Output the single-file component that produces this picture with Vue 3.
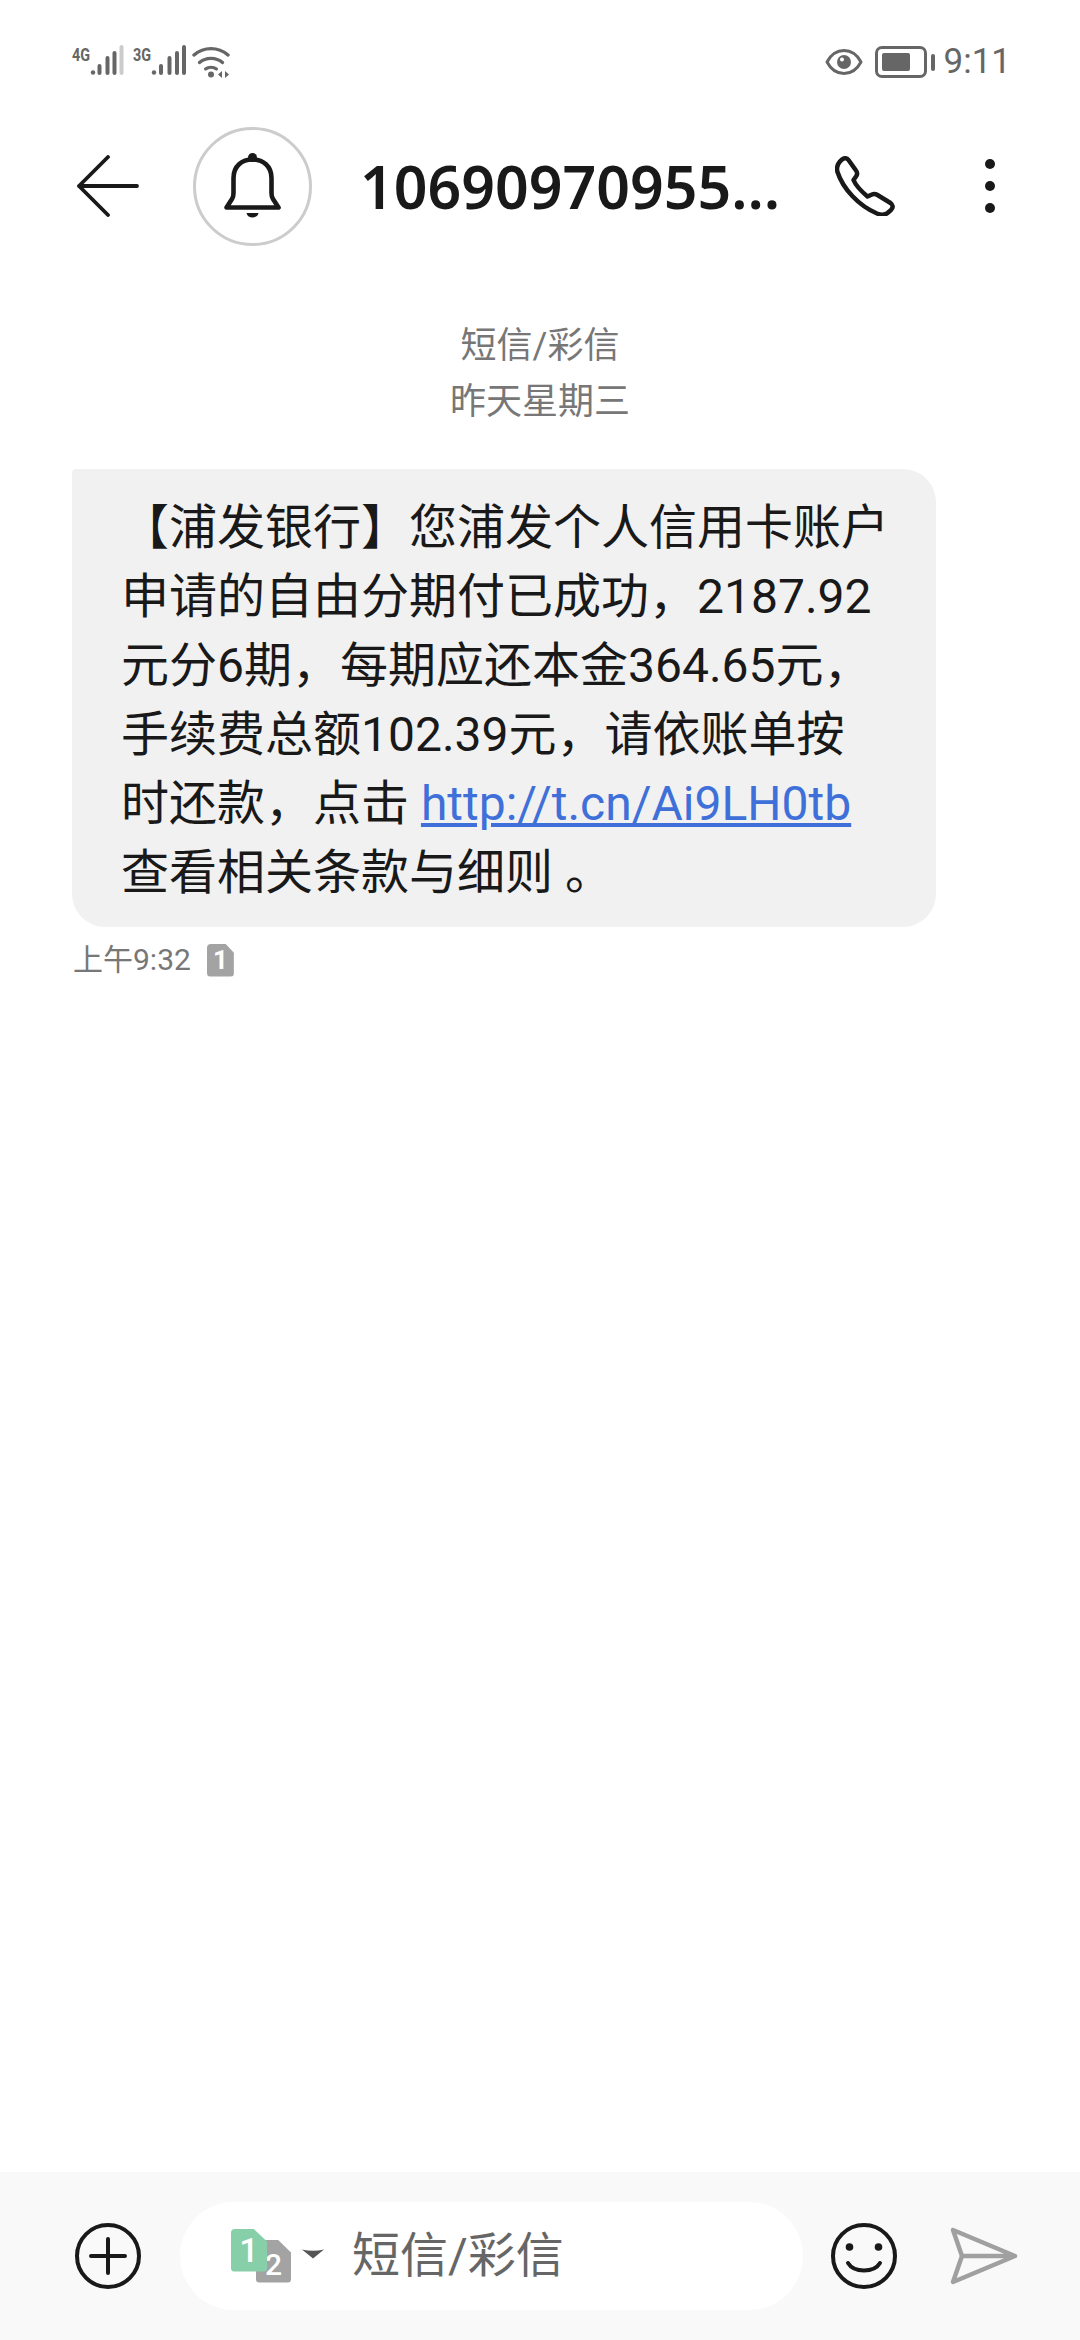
<template>
  <div class="page">
    <div class="status">
      <div class="status-left">
        <div class="signal">
          <span class="net">4G</span>
          <svg width="34" height="32" viewBox="0 0 34 32">
            <circle cx="3" cy="27.500" r="2.200" fill="#666" />
            <rect x="7.500" y="19" width="4" height="11" rx="2" fill="#666" />
            <rect x="15.500" y="11" width="4" height="19" rx="2" fill="#666" />
            <rect x="22.500" y="6" width="4" height="24" rx="2" fill="#666" />
            <rect x="29.500" y="0" width="4" height="30" rx="2" fill="#ccc" />
          </svg>
        </div>
        <div class="signal signal-second">
          <span class="net">3G</span>
          <svg width="36" height="32" viewBox="0 0 36 32">
            <circle cx="3" cy="27.500" r="2.200" fill="#666" />
            <rect x="8" y="19" width="4" height="11" rx="2" fill="#666" />
            <rect x="16.500" y="11" width="4" height="19" rx="2" fill="#666" />
            <rect x="24" y="6" width="4" height="24" rx="2" fill="#666" />
            <rect x="31" y="0" width="4" height="30" rx="2" fill="#666" />
          </svg>
        </div>
        <svg class="wifi" width="38" height="34" viewBox="0 0 38 34">
          <path d="M2 10C12 1.500 26 1.500 36 10" fill="none" stroke="#666" stroke-width="3.400" stroke-linecap="round" />
          <path d="M7.500 17.500C14 12 24 12 30.500 17.500" fill="none" stroke="#666" stroke-width="3.400" stroke-linecap="round" />
          <path d="M13.500 24C16.500 21.500 21.500 21.500 24.500 24" fill="none" stroke="#666" stroke-width="3" stroke-linecap="round" />
          <circle cx="19" cy="29.500" r="3" fill="#666" />
          <path d="M30 26v7l-4-3.500zM33 26v7l4-3.500z" fill="#666" />
        </svg>
      </div>
      <div class="status-right">
        <svg width="38" height="28" viewBox="0 0 38 28">
          <path d="M2 14C6 6.500 12 2.500 19 2.500S32 6.500 36 14C32 21.500 26 25.500 19 25.500S6 21.500 2 14Z" fill="none" stroke="#666" stroke-width="3" stroke-linejoin="round" />
          <circle cx="19" cy="14" r="7" fill="#666" />
          <circle cx="17" cy="11.500" r="2" fill="#fff" />
        </svg>
        <div class="battery">
          <div class="battery-body"><div class="battery-fill"></div></div>
          <div class="battery-nub"></div>
        </div>
        <span class="clock">9:11</span>
      </div>
    </div>

    <div class="header">
      <svg class="back" width="62" height="62" viewBox="0 0 62 62">
        <path d="M60 31H2M31 2L2 31l29 29" fill="none" stroke="#191919" stroke-width="3.800" stroke-linecap="round" stroke-linejoin="round" />
      </svg>
      <div class="avatar">
        <svg width="58" height="66" viewBox="0 0 58 66">
          <path d="M2.500 54.500L8 46Q9.500 44 9.500 40V25C9.500 13 18 6.500 28.500 6.500S47.500 13 47.500 25V40Q47.500 44 49 46L54.500 54.500Z" fill="none" stroke="#191919" stroke-width="4.600" stroke-linejoin="round" />
          <circle cx="28.500" cy="4.500" r="4.500" fill="#191919" />
          <path d="M22.500 60H34.500C33.500 66 23.500 66 22.500 60Z" fill="#191919" />
        </svg>
      </div>
      <div class="title">10690970955…</div>
      <svg class="phone" width="60" height="60" viewBox="0 0 60 60">
        <path d="M7 3.500C9.500 1.500 12 2 13.500 4L21 14.500C22.500 16.500 22.500 18.500 21 20.500L18.500 24C21 30 26 35 32.500 40.500L37 38.500C39 37.500 40.500 37.800 42.500 39L55.500 47C58 48.800 58.500 51.500 56 54L52.500 57C50 59 46 59 42 57.500C24 50 8 33 2.500 16C1 11 3 7 7 3.500Z" fill="none" stroke="#191919" stroke-width="4.500" stroke-linejoin="round" />
      </svg>
      <div class="dots"><i></i><i></i><i></i></div>
    </div>

    <div class="thread-date">
      <div>短信/彩信</div>
      <div>昨天星期三</div>
    </div>

    <div class="bubble">
      【浦发银行】您浦发个人信用卡账户申请的自由分期付已成功，2187.92元分6期，每期应还本金364.65元，手续费总额102.39元，请依账单按时还款，点击 <a class="link">http://t.cn/Ai9LH0tb</a> 查看相关条款与细则 。
    </div>

    <div class="meta">
      <span>上午9:32</span>
      <div class="sim-badge">1</div>
    </div>

    <div class="spacer"></div>

    <div class="composer">
      <svg width="68" height="68" viewBox="0 0 68 68">
        <circle cx="34" cy="34" r="31" fill="none" stroke="#191919" stroke-width="4" />
        <path d="M34 17V51M17 34H51" fill="none" stroke="#191919" stroke-width="4" stroke-linecap="round" />
      </svg>
      <div class="input">
        <div class="sims">
          <div class="sim sim-two">2</div>
          <div class="sim sim-one">1</div>
        </div>
        <svg class="caret" width="22" height="10" viewBox="0 0 22 10">
          <path d="M0 0.500Q11 3 22 0.500L11 9.500Z" fill="#555" />
        </svg>
        <span class="placeholder">短信/彩信</span>
      </div>
      <svg class="smile" width="68" height="68" viewBox="0 0 68 68">
        <circle cx="34" cy="34" r="31" fill="none" stroke="#191919" stroke-width="4" />
        <circle cx="19.500" cy="25" r="3.800" fill="#191919" />
        <circle cx="48.500" cy="25" r="3.800" fill="#191919" />
        <path d="M18 41C24 51 44 51 50 41" fill="none" stroke="#191919" stroke-width="4" stroke-linecap="round" />
      </svg>
      <svg class="send" width="68" height="58" viewBox="0 0 68 58">
        <path d="M3 3L65 29L3 55L12 29ZM12 29H65" fill="none" stroke="#a0a0a0" stroke-width="4.500" stroke-linejoin="round" stroke-linecap="round" />
      </svg>
    </div>
  </div>
</template>

<script setup>
</script>

<style>
html,
body {
  margin: 0;
  background: #fff;
}
</style>

<style scoped>
.page {
  width: 1080px;
  height: 2340px;
  display: flex;
  flex-direction: column;
  background: #fff;
  color: #191919;
  font-family: "Roboto", "Noto Sans CJK SC", sans-serif;
  overflow: hidden;
}

.status {
  height: 62px;
  padding: 41px 69px 0 72px;
  display: flex;
  justify-content: space-between;
  align-items: flex-start;
}

.status-left {
  display: flex;
  align-items: flex-start;
}

.signal {
  display: flex;
  align-items: flex-start;
  margin-top: 4px;
}

.signal-second {
  margin-left: 9px;
}

.net {
  width: 18px;
  margin-top: 2px;
  color: #666;
  font-size: 18px;
  line-height: 16px;
  font-weight: 700;
  white-space: nowrap;
  transform: scaleX(0.8);
  transform-origin: left center;
}

.wifi {
  margin-left: 5px;
  margin-top: 4px;
}

.status-right {
  display: flex;
  align-items: center;
  height: 42px;
  color: #666;
}

.battery {
  display: flex;
  align-items: center;
  margin-left: 12px;
}

.battery-body {
  width: 52px;
  height: 32px;
  padding: 4px;
  box-sizing: border-box;
  border: 3px solid #666;
  border-radius: 7px;
}

.battery-fill {
  width: 28px;
  height: 18px;
  background: #666;
  border-radius: 2px;
}

.battery-nub {
  width: 4px;
  height: 17px;
  margin-left: 4px;
  background: #666;
  border-radius: 2px;
}

.clock {
  margin-left: 9px;
  font-size: 35px;
  line-height: 42px;
}

.header {
  height: 120px;
  margin-top: 23px;
  display: flex;
  align-items: center;
  padding-left: 77px;
}

.back {
  flex: none;
}

.avatar {
  width: 119px;
  height: 119px;
  margin-left: 54px;
  box-sizing: border-box;
  border: 3px solid #ccc;
  border-radius: 50%;
  display: flex;
  align-items: center;
  justify-content: center;
}

.title {
  margin-left: 48px;
  width: 475px;
  font-family: "Noto Sans", "Noto Sans CJK SC", sans-serif;
  font-size: 59px;
  line-height: 80px;
  font-weight: 600;
  white-space: nowrap;
}

.phone {
  flex: none;
}

.dots {
  margin-left: 90px;
  display: flex;
  flex-direction: column;
  gap: 12px;
}

.dots i {
  display: block;
  width: 10px;
  height: 10px;
  background: #191919;
  border-radius: 50%;
}

.thread-date {
  margin-top: 72px;
  text-align: center;
  color: #777;
  font-size: 36px;
  line-height: 56px;
}

.bubble {
  width: 864px;
  margin: 39px 0 0 72px;
  padding: 24px 44px 20px 49px;
  box-sizing: border-box;
  background: #f1f1f1;
  border-radius: 4px 33px 33px 33px;
  font-size: 48px;
  line-height: 69px;
}

.link {
  color: #3f6fd8;
  text-decoration: underline;
}

.meta {
  margin: 12px 0 0 73px;
  display: flex;
  align-items: center;
  color: #777;
  font-size: 30px;
  line-height: 42px;
}

.sim-badge {
  width: 27px;
  height: 33px;
  margin-left: 16px;
  background: #a3a3a3;
  border-radius: 4px;
  clip-path: polygon(0 0, 68% 0, 100% 28%, 100% 100%, 0 100%);
  color: #fff;
  font-size: 26px;
  line-height: 33px;
  font-weight: 700;
  text-align: center;
}

.spacer {
  flex: 1;
}

.composer {
  height: 168px;
  background: #f9f9f9;
  display: flex;
  align-items: center;
  padding-left: 74px;
}

.input {
  width: 623px;
  height: 108px;
  margin-left: 38px;
  border-radius: 54px;
  background: #fff;
  display: flex;
  align-items: center;
  padding-left: 51px;
  box-sizing: border-box;
}

.sims {
  position: relative;
  width: 60px;
  height: 55px;
  flex: none;
}

.sim {
  position: absolute;
  color: #fff;
  text-align: center;
  border-radius: 4px;
  clip-path: polygon(0 0, 62% 0, 100% 30%, 100% 100%, 0 100%);
}

.sim-one {
  left: 0;
  top: 0;
  width: 36px;
  height: 43px;
  background: #87cfa9;
  font-size: 34px;
  line-height: 42px;
  font-weight: 500;
}

.sim-two {
  left: 25px;
  top: 11px;
  width: 35px;
  height: 43px;
  background: #a3a3a3;
  font-size: 30px;
  line-height: 50px;
  font-weight: 500;
}

.caret {
  margin-left: 11px;
  margin-bottom: 4px;
  flex: none;
}

.placeholder {
  margin-left: 28px;
  color: #666;
  font-size: 48px;
  line-height: 60px;
}

.smile {
  margin-left: 27px;
}

.send {
  margin-left: 52px;
}
</style>
